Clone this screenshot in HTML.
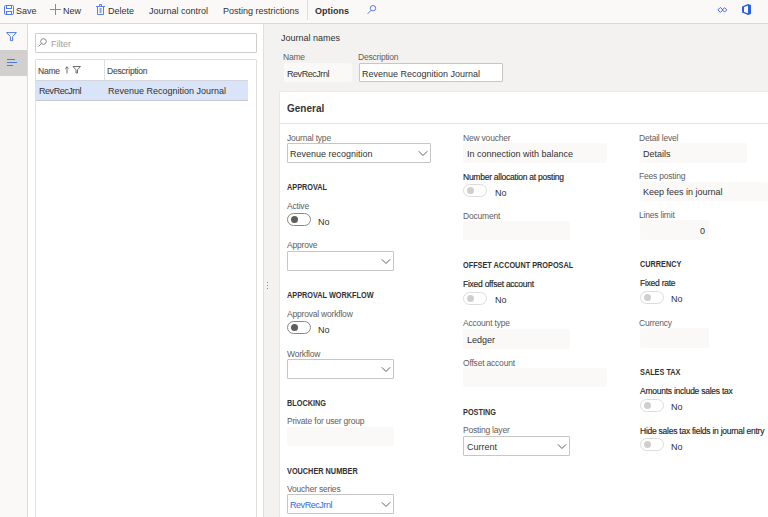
<!DOCTYPE html>
<html><head><meta charset="utf-8">
<style>
*{box-sizing:border-box;margin:0;padding:0}
html,body{width:768px;height:517px;overflow:hidden;background:#f3f2f1}
body{position:relative;font-family:"Liberation Sans",sans-serif;color:#323130}
.a{position:absolute;white-space:nowrap}
.t9{font-size:9px;line-height:9px}
.t8{font-size:8px;line-height:8px}
.lbl{font-size:8.5px;line-height:8px;color:#5f5d5b;letter-spacing:-0.2px}
.lbd{font-size:8.5px;line-height:8px;color:#252423;letter-spacing:-0.25px;-webkit-text-stroke:0.15px #252423}
.hd{font-size:8.5px;line-height:8px;font-weight:bold;color:#323130;transform:scaleX(0.86);transform-origin:0 0}
.box{position:absolute;border:1px solid #c8c6c4;background:#fff;border-radius:1px}
.ro{position:absolute;background:#faf9f8;border-radius:2px}
.chev{position:absolute;width:10px;height:6px}
.tog{position:absolute;width:24px;height:13px;border:1px solid #8a8886;border-radius:7px;background:#fff}
.tog i{position:absolute;left:3px;top:2px;width:7px;height:7px;border-radius:50%;background:#605e5c}
.tog.dis{border-color:#dcdcdc}
.tog.dis i{background:#cfcfcf}
</style></head><body>
<!-- toolbar -->
<div class="a" style="left:0;top:0;width:768px;height:24px;background:#faf9f8;border-bottom:1px solid #d9d7d5"></div>
<svg class="a" style="left:4px;top:5px" width="10" height="10" viewBox="0 0 10 10"><rect x="0.5" y="0.5" width="9" height="9" rx="1" fill="none" stroke="#4d7ae6" stroke-width="1"/><rect x="2.5" y="0.5" width="5" height="3" fill="none" stroke="#4d7ae6" stroke-width="1"/><rect x="2.5" y="6.5" width="5" height="3" fill="none" stroke="#4d7ae6" stroke-width="1"/></svg>
<div class="a t9" style="left:16px;top:7px">Save</div>
<svg class="a" style="left:50px;top:4px" width="11" height="11" viewBox="0 0 11 11"><path d="M5.5 0V11M0 5.5H11" stroke="#6b88ea" stroke-width="1"/></svg>
<div class="a t9" style="left:63px;top:7px">New</div>
<svg class="a" style="left:96px;top:4px" width="9" height="11" viewBox="0 0 9 11"><path d="M0 2.5H9M3.5 2.5V0.5H5.5V2.5M1.5 2.5V10.5H7.5V2.5" fill="none" stroke="#5a80e8" stroke-width="1"/><rect x="3.5" y="4" width="2" height="5" fill="#8f9de6"/></svg>
<div class="a t9" style="left:108px;top:7px">Delete</div>
<div class="a t9" style="left:149px;top:7px">Journal control</div>
<div class="a t9" style="left:223px;top:7px">Posting restrictions</div>
<div class="a" style="left:307px;top:0;width:1px;height:20px;background:#e1dfdd"></div>
<div class="a t9" style="left:315px;top:7px;font-weight:bold">Options</div>
<svg class="a" style="left:367px;top:4px" width="10" height="11" viewBox="0 0 10 11"><circle cx="6" cy="4.2" r="2.7" fill="none" stroke="#5a7fe8" stroke-width="1"/><path d="M4 6.3L0.6 9.9" stroke="#5a7fe8" stroke-width="1"/></svg>
<svg class="a" style="left:716px;top:6px" width="12" height="8" viewBox="0 0 12 8"><path d="M4.4 1.4L6.9 3.9L4.4 6.4L1.9 3.9Z" fill="none" stroke="#3a68e6" stroke-width="1"/><path d="M8.6 1.7L10.8 3.9L8.6 6.1L6.4 3.9Z" fill="none" stroke="#3a68e6" stroke-width="1"/></svg>
<svg class="a" style="left:742px;top:4px" width="9" height="11" viewBox="0 0 9 11"><path d="M0 2.5L6 0L9 1V10L6 11L0 8.5Z M2 3V8L6 9.3V1.8Z" fill="#2b5fe3" fill-rule="evenodd"/></svg>

<!-- left nav -->
<div class="a" style="left:0;top:24px;width:28px;height:493px;background:#faf9f8;border-right:1px solid #dcdad8"></div>
<svg class="a" style="left:6px;top:32px" width="11" height="10" viewBox="0 0 11 10"><path d="M0.6 0.6H10.4L6.6 4.6V8.6H4.4V4.6Z" fill="none" stroke="#4d7ae6" stroke-width="1" stroke-linejoin="round"/></svg>
<div class="a" style="left:0;top:50px;width:27px;height:26px;background:#d2d0ce"></div>
<div class="a" style="left:7px;top:59px;width:8px;height:1px;background:#4d7ae6"></div>
<div class="a" style="left:7px;top:62px;width:10px;height:1px;background:#4d7ae6"></div>
<div class="a" style="left:7px;top:65px;width:6px;height:1px;background:#4d7ae6"></div>

<!-- list panel -->
<div class="a" style="left:28px;top:24px;width:236px;height:493px;background:#fff;border-right:1px solid #e1dfdd"></div>
<div class="box" style="left:35px;top:33px;width:222px;height:20px;border-color:#cfcdcb"></div>
<svg class="a" style="left:38px;top:38px" width="9" height="9" viewBox="0 0 9 9"><circle cx="5.5" cy="3.5" r="2.8" fill="none" stroke="#8a8886" stroke-width="1"/><path d="M3.5 5.5L0.5 8.5" stroke="#8a8886" stroke-width="1"/></svg>
<div class="a t9" style="left:51px;top:40px;color:#a19f9d">Filter</div>
<div class="box" style="left:35px;top:59px;width:222px;height:470px;border-color:#e1dfdd"></div>
<div class="a" style="left:104px;top:60px;width:1px;height:20px;background:#e1dfdd"></div>
<div class="a lbl" style="left:38px;top:67px;color:#4f4d4b;-webkit-text-stroke:0.12px #4f4d4b">Name</div>
<svg class="a" style="left:64px;top:66px" width="18" height="8" viewBox="0 0 18 8"><path d="M3 0.8V7.5M1.2 2.6L3 0.8L4.8 2.6" fill="none" stroke="#6f6d6b" stroke-width="1"/><path d="M9 0.5H16.5L13.5 3.8V7H12V3.8Z" fill="none" stroke="#6f6d6b" stroke-width="1"/></svg>
<div class="a lbl" style="left:107px;top:67px;color:#4f4d4b;-webkit-text-stroke:0.12px #4f4d4b">Description</div>
<div class="a" style="left:36px;top:80px;width:212px;height:21px;background:#dae4f9;border-top:1px solid #d3d6dd;border-bottom:1px solid #c6c8cc"></div>
<div class="a t9" style="left:39px;top:87px"><span style="letter-spacing:-0.45px">RevRecJrnl</span></div>
<div class="a t9" style="left:108px;top:87px">Revenue Recognition Journal</div>

<!-- splitter dots -->
<div class="a" style="left:267px;top:282px;width:1px;height:1px;background:#8a8886"></div>
<div class="a" style="left:267px;top:285px;width:1px;height:1px;background:#8a8886"></div>
<div class="a" style="left:267px;top:288px;width:1px;height:1px;background:#8a8886"></div>

<!-- header -->
<div class="a t9" style="left:281px;top:34px">Journal names</div>
<div class="a lbl" style="left:283px;top:53px">Name</div>
<div class="ro" style="left:284px;top:63px;width:68px;height:19px"></div>
<div class="a t9" style="left:287px;top:70px"><span style="letter-spacing:-0.45px">RevRecJrnl</span></div>
<div class="a lbl" style="left:358px;top:53px">Description</div>
<div class="box" style="left:359px;top:63px;width:144px;height:19px"></div>
<div class="a t9" style="left:362px;top:70px">Revenue Recognition Journal</div>

<!-- card -->
<div class="a" style="left:279px;top:91px;width:489px;height:426px;background:#fff;border-left:1px solid #e9e7e5;border-top:1px solid #ecebe9"></div>
<div class="a" style="left:280px;top:123px;width:488px;height:1px;background:#e6e4e2"></div>
<div class="a" style="left:287px;top:104px;font-size:10px;line-height:10px;font-weight:bold;color:#363534">General</div>

<!-- col1 -->
<div class="a lbl" style="left:287px;top:134px">Journal type</div>
<div class="box" style="left:287px;top:143px;width:144px;height:20px"></div>
<div class="a t9" style="left:290px;top:150px">Revenue recognition</div>
<svg class="chev" style="left:418px;top:151px" viewBox="0 0 10 6"><path d="M0.8 0.3L5 4.5L9.2 0.3" fill="none" stroke="#605e5c" stroke-width="1"/></svg>

<div class="a hd" style="left:287px;top:183px">APPROVAL</div>
<div class="a lbl" style="left:287px;top:202px">Active</div>
<div class="tog" style="left:287px;top:213px"><i></i></div>
<div class="a t9" style="left:318px;top:218px">No</div>

<div class="a lbl" style="left:287px;top:241px">Approve</div>
<div class="box" style="left:287px;top:251px;width:107px;height:20px"></div>
<svg class="chev" style="left:381px;top:259px" viewBox="0 0 10 6"><path d="M0.8 0.3L5 4.5L9.2 0.3" fill="none" stroke="#605e5c" stroke-width="1"/></svg>

<div class="a hd" style="left:287px;top:291px">APPROVAL WORKFLOW</div>
<div class="a lbl" style="left:287px;top:310px">Approval workflow</div>
<div class="tog" style="left:287px;top:321px"><i></i></div>
<div class="a t9" style="left:318px;top:326px">No</div>

<div class="a lbl" style="left:287px;top:350px">Workflow</div>
<div class="box" style="left:287px;top:359px;width:107px;height:20px"></div>
<svg class="chev" style="left:381px;top:367px" viewBox="0 0 10 6"><path d="M0.8 0.3L5 4.5L9.2 0.3" fill="none" stroke="#605e5c" stroke-width="1"/></svg>

<div class="a hd" style="left:287px;top:399px">BLOCKING</div>
<div class="a lbl" style="left:287px;top:417px">Private for user group</div>
<div class="ro" style="left:287px;top:427px;width:107px;height:19px"></div>

<div class="a hd" style="left:287px;top:467px">VOUCHER NUMBER</div>
<div class="a lbl" style="left:287px;top:485px">Voucher series</div>
<div class="box" style="left:287px;top:494px;width:107px;height:20px"></div>
<div class="a t9" style="left:290px;top:501px;color:#2f6be6"><span style="letter-spacing:-0.45px">RevRecJrnl</span></div>
<svg class="chev" style="left:381px;top:502px" viewBox="0 0 10 6"><path d="M0.8 0.3L5 4.5L9.2 0.3" fill="none" stroke="#605e5c" stroke-width="1"/></svg>

<!-- col2 -->
<div class="a lbl" style="left:463px;top:134px">New voucher</div>
<div class="ro" style="left:463px;top:143px;width:144px;height:20px"></div>
<div class="a t9" style="left:467px;top:150px">In connection with balance</div>
<div class="a lbd" style="left:463px;top:173px">Number allocation at posting</div>
<div class="tog dis" style="left:463px;top:184px"><i></i></div>
<div class="a t9" style="left:495px;top:189px">No</div>
<div class="a lbl" style="left:463px;top:212px">Document</div>
<div class="ro" style="left:463px;top:221px;width:107px;height:19px"></div>

<div class="a hd" style="left:463px;top:261px">OFFSET ACCOUNT PROPOSAL</div>
<div class="a lbd" style="left:463px;top:280px">Fixed offset account</div>
<div class="tog dis" style="left:463px;top:292px"><i></i></div>
<div class="a t9" style="left:495px;top:296px">No</div>
<div class="a lbl" style="left:463px;top:319px">Account type</div>
<div class="ro" style="left:463px;top:329px;width:107px;height:20px"></div>
<div class="a t9" style="left:467px;top:336px">Ledger</div>
<div class="a lbl" style="left:463px;top:359px">Offset account</div>
<div class="ro" style="left:463px;top:368px;width:144px;height:19px"></div>

<div class="a hd" style="left:463px;top:408px">POSTING</div>
<div class="a lbl" style="left:463px;top:426px">Posting layer</div>
<div class="box" style="left:463px;top:436px;width:107px;height:20px"></div>
<div class="a t9" style="left:467px;top:443px">Current</div>
<svg class="chev" style="left:557px;top:444px" viewBox="0 0 10 6"><path d="M0.8 0.3L5 4.5L9.2 0.3" fill="none" stroke="#605e5c" stroke-width="1"/></svg>

<!-- col3 -->
<div class="a lbl" style="left:639px;top:134px">Detail level</div>
<div class="ro" style="left:640px;top:143px;width:107px;height:20px"></div>
<div class="a t9" style="left:643px;top:150px">Details</div>
<div class="a lbl" style="left:639px;top:172px">Fees posting</div>
<div class="ro" style="left:640px;top:182px;width:128px;height:19px"></div>
<div class="a t9" style="left:643px;top:188px">Keep fees in journal</div>
<div class="a lbl" style="left:639px;top:211px">Lines limit</div>
<div class="ro" style="left:640px;top:220px;width:69px;height:20px"></div>
<div class="a t9" style="left:700px;top:227px">0</div>

<div class="a hd" style="left:640px;top:260px">CURRENCY</div>
<div class="a lbd" style="left:640px;top:279px">Fixed rate</div>
<div class="tog dis" style="left:640px;top:291px"><i></i></div>
<div class="a t9" style="left:671px;top:295px">No</div>
<div class="a lbl" style="left:639px;top:319px">Currency</div>
<div class="ro" style="left:640px;top:328px;width:69px;height:20px"></div>

<div class="a hd" style="left:640px;top:368px">SALES TAX</div>
<div class="a lbd" style="left:640px;top:387px">Amounts include sales tax</div>
<div class="tog dis" style="left:640px;top:399px"><i></i></div>
<div class="a t9" style="left:671px;top:403px">No</div>
<div class="a lbd" style="left:640px;top:427px">Hide sales tax fields in journal entry</div>
<div class="tog dis" style="left:640px;top:438px"><i></i></div>
<div class="a t9" style="left:671px;top:443px">No</div>
</body></html>
